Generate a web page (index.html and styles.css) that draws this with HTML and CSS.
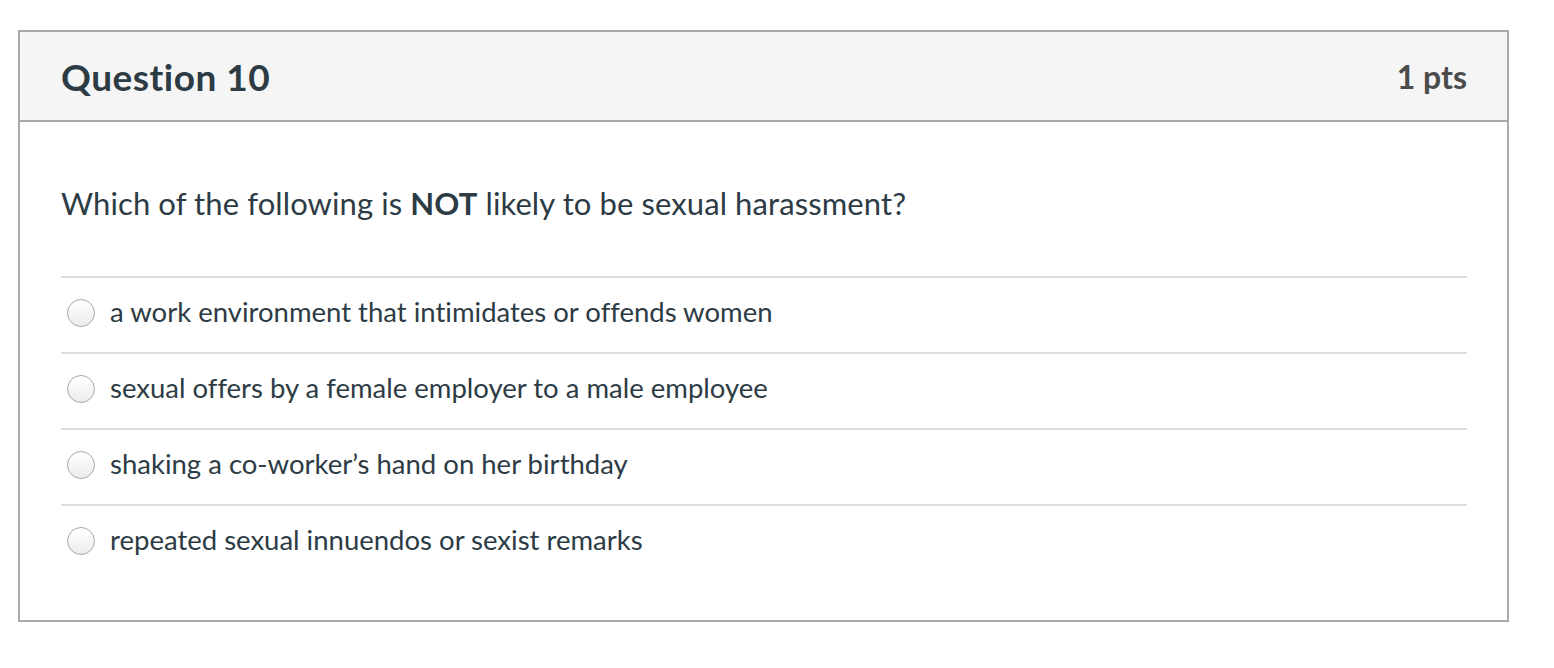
FILE: index.html
```html
<!DOCTYPE html>
<html>
<head>
<meta charset="utf-8">
<link rel="stylesheet" href="styles.css">
</head>
<body>
<div class="question">
  <div class="q-header">
    <h2 class="q-title">Question 10</h2>
    <div class="q-points">1 pts</div>
  </div>
  <div class="q-body">
    <p class="q-text">Which of the following is <strong>NOT</strong> likely to be sexual harassment?</p>
    <div class="answers">
      <label class="answer"><span class="radio"></span><span class="a-text">a work environment that intimidates or offends women</span></label>
      <label class="answer"><span class="radio"></span><span class="a-text">sexual offers by a female employer to a male employee</span></label>
      <label class="answer"><span class="radio"></span><span class="a-text">shaking a co-worker’s hand on her birthday</span></label>
      <label class="answer"><span class="radio"></span><span class="a-text">repeated sexual innuendos or sexist remarks</span></label>
    </div>
  </div>
</div>
</body>
</html>
```
FILE: styles.css
```css
html, body {
  margin: 0;
  padding: 0;
  background: #fff;
}
body {
  font-family: Lato, "Open Sans", sans-serif;
  color: #2d3b45;
  padding: 30px 0 0 18px;
  font-variant-ligatures: none;
}
.question {
  width: 1487px;
  border: 2px solid #aaaaaa;
}
.q-header {
  height: 88px;
  background: #f5f5f5;
  border-bottom: 2px solid #aaaaaa;
  display: flex;
  align-items: center;
  justify-content: space-between;
  padding: 0 40px 0 41px;
}
.q-title {
  margin: 0;
  font-size: 37px;
  letter-spacing: 0.5px;
  font-weight: 700;
  color: #2d3b45;
}
.q-points {
  font-size: 32px;
  font-weight: 700;
  color: #4b4b4b;
}
.q-body {
  padding: 61px 40px 40px 41px;
}
.q-text {
  margin: 0 0 53px 0;
  font-size: 31px;
  line-height: 40px;
  letter-spacing: 0.1px;
}
.q-text strong {
  font-weight: 700;
}
.answer {
  display: flex;
  align-items: center;
  height: 68px;
  padding-bottom: 6px;
  border-top: 2px solid #dddddd;
}
.radio {
  width: 26px;
  height: 26px;
  border-radius: 50%;
  border: 1px solid #a8a8a8;
  background: linear-gradient(#ffffff, #ececec);
  margin: 2px 15px 0 6px;
  flex: none;
}
.a-text {
  font-size: 27.5px;
  line-height: 34px;
}
```
